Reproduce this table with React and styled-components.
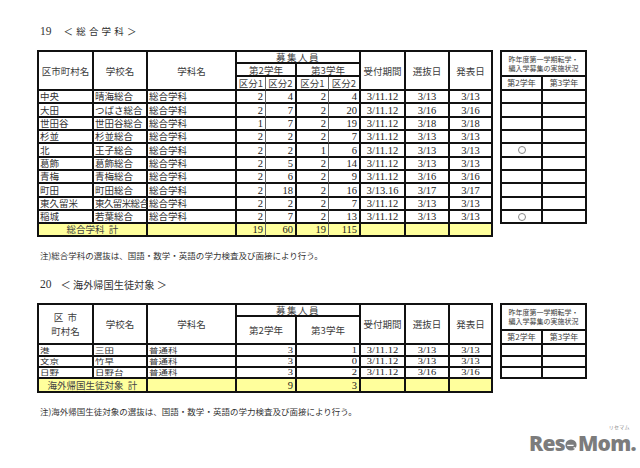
import React from "react";
import styled, { createGlobalStyle } from "styled-components";

const Global = createGlobalStyle`
  html, body { margin: 0; padding: 0; background: #fff; }
  body { font-family: "Noto Sans CJK JP", "Noto Sans", sans-serif; color: #222; }
`;

const Page = styled.div`
  position: relative;
  width: 640px;
  height: 468px;
  overflow: hidden;
  box-sizing: border-box;
  padding: 24px 0 0 37px;
  background: #fff;
`;

const Title = styled.div`
  height: 14px;
  margin: ${({ $mt }) => $mt || 0}px 0 0 3px;
  display: flex;
  align-items: center;
  white-space: nowrap;
  color: #333;
`;

const TitleNum = styled.span`
  font-family: "Liberation Serif", serif;
  font-size: 11.5px;
  margin-right: ${({ $gap }) => $gap}px;
`;

const TitleText = styled.span`
  font-family: "Noto Sans CJK JP", sans-serif;
  font-size: ${({ $size }) => $size}px;
  letter-spacing: ${({ $spacing }) => $spacing}px;
`;

const Tables = styled.div`
  display: flex;
  align-items: flex-start;
  gap: 7px;
  margin-top: 12px;
`;

const Grid = styled.div`
  flex: none;
  display: grid;
  grid-template-columns: ${({ $cols }) => $cols};
  grid-template-rows: ${({ $rows }) => $rows};
  border-top: 2px solid #111;
  border-left: 2px solid #111;
`;

const Cell = styled.div`
  box-sizing: border-box;
  grid-column: ${({ $c, $cs = 1 }) => `${$c} / span ${$cs}`};
  grid-row: ${({ $r, $rs = 1 }) => `${$r} / span ${$rs}`};
  border-right: ${({ $thin }) => ($thin ? "1px solid #6a6a6a" : "2px solid #111")};
  border-bottom: 2px solid #111;
  background: ${({ $total }) => ($total ? "#ffff9c" : "#fff")};
  display: flex;
  align-items: center;
  justify-content: ${({ $align }) =>
    $align === "left" ? "flex-start" : $align === "right" ? "flex-end" : "center"};
  padding: 0 2px;
  white-space: nowrap;
  min-width: 0;
  overflow: visible;
`;

const Head = styled(Cell)`
  font-size: ${({ $size }) => $size || 9.5}px;
  line-height: ${({ $lh }) => $lh || 10}px;
  color: #3c3c3c;
  text-align: center;
  letter-spacing: ${({ $ls }) => $ls || 0}px;
`;

const Name = styled(Cell)`
  font-size: 9.5px;
  line-height: 9px;
  color: #333;
  padding-left: 1px;
  letter-spacing: ${({ $ls }) => $ls || 0}px;
`;

const Num = styled(Cell)`
  font-family: "Liberation Serif", serif;
  font-size: 10.5px;
  line-height: 9px;
  color: #222;
  padding-right: 2px;
`;

const TotalLabel = styled(Cell)`
  font-size: 9.5px;
  line-height: 9px;
  color: #444;
`;

const Squash = styled.span`
  display: inline-block;
  transform: scaleY(0.72);
  transform-origin: center;
`;

const Mark = styled.span`
  width: 6px;
  height: 6px;
  border: 1px solid #888;
  border-radius: 50%;
`;

const Note = styled.div`
  height: 12px;
  line-height: 12px;
  margin: 12px 0 0 3px;
  font-size: 8.5px;
  color: #333;
  white-space: nowrap;
`;

const Logo = styled.div`
  position: absolute;
  left: 529px;
  top: 431px;
  display: flex;
  align-items: baseline;
  font-family: "Open Sans", sans-serif;
  font-weight: 800;
  font-size: 21px;
  line-height: 24px;
  letter-spacing: -0.7px;
  color: #7c7c7c;
`;

const LogoBall = styled.svg`
  width: 12px;
  height: 12px;
  margin: 0 0.5px;
  align-self: center;
  transform: translateY(2px);
`;

const LogoKana = styled.span`
  position: absolute;
  right: 6px;
  top: -7px;
  font-family: "Noto Sans CJK JP", sans-serif;
  font-weight: 400;
  font-size: 5px;
  line-height: 5px;
  letter-spacing: 0.3px;
  color: #8a8a8a;
`;

const rows1 = [
  ["中央", "晴海総合", "総合学科", 2, 4, 2, 4, "3/11.12", "3/13", "3/13", false],
  ["大田", "つばさ総合", "総合学科", 2, 7, 2, 20, "3/11.12", "3/16", "3/16", false],
  ["世田谷", "世田谷総合", "総合学科", 1, 7, 2, 19, "3/11.12", "3/18", "3/18", false],
  ["杉並", "杉並総合", "総合学科", 2, 2, 2, 7, "3/11.12", "3/13", "3/13", false],
  ["北", "王子総合", "総合学科", 2, 2, 1, 6, "3/11.12", "3/13", "3/13", true],
  ["葛飾", "葛飾総合", "総合学科", 2, 5, 2, 14, "3/11.12", "3/13", "3/13", false],
  ["青梅", "青梅総合", "総合学科", 2, 6, 2, 9, "3/11.12", "3/16", "3/16", false],
  ["町田", "町田総合", "総合学科", 2, 18, 2, 16, "3/13.16", "3/17", "3/17", false],
  ["東久留米", "東久留米総合", "総合学科", 2, 2, 2, 7, "3/11.12", "3/13", "3/13", false],
  ["稲城", "若葉総合", "総合学科", 2, 7, 2, 13, "3/11.12", "3/13", "3/13", true],
];

const rows2 = [
  ["港", "三田", "普通科", 3, 1, "3/11.12", "3/13", "3/13"],
  ["文京", "竹早", "普通科", 3, 0, "3/11.12", "3/13", "3/13"],
  ["日野", "日野台", "普通科", 3, 2, "3/11.12", "3/16", "3/16"],
];

const dataRows1 = "13px 14px 13px 13px 14px 13px 13px 14px 13px 13px";

function Table19() {
  return (
    <Grid
      $cols="55px 54px 89px 29px 31px 32px 32px 45px 44px 43px"
      $rows={`12px 13px 14px ${dataRows1} 13px`}
    >
      <Head $c={1} $r={1} $rs={3}>区市町村名</Head>
      <Head $c={2} $r={1} $rs={3}>学校名</Head>
      <Head $c={3} $r={1} $rs={3}>学科名</Head>
      <Head $c={4} $r={1} $cs={4} $ls={1.5}>募集人員</Head>
      <Head $c={4} $r={2} $cs={2}>第2学年</Head>
      <Head $c={6} $r={2} $cs={2}>第3学年</Head>
      <Head $c={4} $r={3} $thin>区分1</Head>
      <Head $c={5} $r={3}>区分2</Head>
      <Head $c={6} $r={3} $thin>区分1</Head>
      <Head $c={7} $r={3}>区分2</Head>
      <Head $c={8} $r={1} $rs={3}>受付期間</Head>
      <Head $c={9} $r={1} $rs={3}>選抜日</Head>
      <Head $c={10} $r={1} $rs={3}>発表日</Head>
      {rows1.map((d, i) => {
        const r = i + 4;
        return (
          <React.Fragment key={i}>
            <Name $c={1} $r={r} $align="left">{d[0]}</Name>
            <Name $c={2} $r={r} $align="left" $ls={d[1].length > 5 ? -0.6 : 0}>{d[1]}</Name>
            <Name $c={3} $r={r} $align="left">{d[2]}</Name>
            <Num $c={4} $r={r} $align="right" $thin>{d[3]}</Num>
            <Num $c={5} $r={r} $align="right">{d[4]}</Num>
            <Num $c={6} $r={r} $align="right" $thin>{d[5]}</Num>
            <Num $c={7} $r={r} $align="right">{d[6]}</Num>
            <Num $c={8} $r={r}>{d[7]}</Num>
            <Num $c={9} $r={r}>{d[8]}</Num>
            <Num $c={10} $r={r}>{d[9]}</Num>
          </React.Fragment>
        );
      })}
      <TotalLabel $c={1} $r={14} $cs={2} $total>総合学科&nbsp;&nbsp;計</TotalLabel>
      <Cell $c={3} $r={14} $total />
      <Num $c={4} $r={14} $align="right" $thin $total>19</Num>
      <Num $c={5} $r={14} $align="right" $total>60</Num>
      <Num $c={6} $r={14} $align="right" $thin $total>19</Num>
      <Num $c={7} $r={14} $align="right" $total>115</Num>
      <Cell $c={8} $r={14} $total />
      <Cell $c={9} $r={14} $total />
      <Cell $c={10} $r={14} $total />
    </Grid>
  );
}

function SideTable({ rows, marks }) {
  const count = marks.length;
  return (
    <Grid $cols="41px 44px" $rows={rows}>
      <Head $c={1} $r={1} $cs={2} $size={7} $lh={9}>
        <span>昨年度第一学期転学・<br />編入学募集の実施状況</span>
      </Head>
      <Head $c={1} $r={2} $size={8}>第2学年</Head>
      <Head $c={2} $r={2} $size={8}>第3学年</Head>
      {Array.from({ length: count }).map((_, i) => (
        <React.Fragment key={i}>
          <Cell $c={1} $r={i + 3}>{marks[i] ? <Mark /> : null}</Cell>
          <Cell $c={2} $r={i + 3} />
        </React.Fragment>
      ))}
    </Grid>
  );
}

function Table20() {
  return (
    <Grid
      $cols="55px 54px 89px 60px 64px 45px 44px 43px"
      $rows="12px 28px 12px 11px 11px 14px"
    >
      <Head $c={1} $r={1} $rs={2} $lh={14}>
        <span>区&nbsp;&nbsp;市<br />町村名</span>
      </Head>
      <Head $c={2} $r={1} $rs={2}>学校名</Head>
      <Head $c={3} $r={1} $rs={2}>学科名</Head>
      <Head $c={4} $r={1} $cs={2} $ls={1.5}>募集人員</Head>
      <Head $c={4} $r={2}>第2学年</Head>
      <Head $c={5} $r={2}>第3学年</Head>
      <Head $c={6} $r={1} $rs={2}>受付期間</Head>
      <Head $c={7} $r={1} $rs={2}>選抜日</Head>
      <Head $c={8} $r={1} $rs={2}>発表日</Head>
      {rows2.map((d, i) => {
        const r = i + 3;
        return (
          <React.Fragment key={i}>
            <Name $c={1} $r={r} $align="left"><Squash>{d[0]}</Squash></Name>
            <Name $c={2} $r={r} $align="left"><Squash>{d[1]}</Squash></Name>
            <Name $c={3} $r={r} $align="left"><Squash>{d[2]}</Squash></Name>
            <Num $c={4} $r={r} $align="right"><Squash>{d[3]}</Squash></Num>
            <Num $c={5} $r={r} $align="right"><Squash>{d[4]}</Squash></Num>
            <Num $c={6} $r={r}><Squash>{d[5]}</Squash></Num>
            <Num $c={7} $r={r}><Squash>{d[6]}</Squash></Num>
            <Num $c={8} $r={r}><Squash>{d[7]}</Squash></Num>
          </React.Fragment>
        );
      })}
      <TotalLabel $c={1} $r={6} $cs={2} $total>海外帰国生徒対象&nbsp;&nbsp;計</TotalLabel>
      <Cell $c={3} $r={6} $total />
      <Num $c={4} $r={6} $align="right" $total>9</Num>
      <Num $c={5} $r={6} $align="right" $total>3</Num>
      <Cell $c={6} $r={6} $total />
      <Cell $c={7} $r={6} $total />
      <Cell $c={8} $r={6} $total />
    </Grid>
  );
}

export default function App() {
  return (
    <>
      <Global />
      <Page>
        <Title>
          <TitleNum $gap={12}>19</TitleNum>
          <TitleText $size={9.5} $spacing={3.2}>＜総合学科＞</TitleText>
        </Title>
        <Tables>
          <Table19 />
          <SideTable
            rows={`25px 14px ${dataRows1}`}
            marks={[false, false, false, false, true, false, false, false, false, true]}
          />
        </Tables>
        <Note>注)総合学科の選抜は、国語・数学・英語の学力検査及び面接により行う。</Note>

        <Title $mt={16}>
          <TitleNum $gap={9}>20</TitleNum>
          <TitleText $size={10.2} $spacing={0}>＜ 海外帰国生徒対象 ＞</TitleText>
        </Title>
        <Tables>
          <Table20 />
          <SideTable rows="26px 14px 12px 11px 11px" marks={[false, false, false]} />
        </Tables>
        <Note>注)海外帰国生徒対象の選抜は、国語・数学・英語の学力検査及び面接により行う。</Note>

        <Logo>
          Res
          <LogoBall viewBox="0 0 12 12">
            <circle cx="6" cy="6" r="5.6" fill="#7c7c7c" />
            <path d="M2.2 6.4 H8.6" stroke="#fff" strokeWidth="1.3" />
            <path d="M8.6 8.6 L11.5 9.6" stroke="#fff" strokeWidth="1.4" />
          </LogoBall>
          Mom.
          <LogoKana>リセマム</LogoKana>
        </Logo>
      </Page>
    </>
  );
}
